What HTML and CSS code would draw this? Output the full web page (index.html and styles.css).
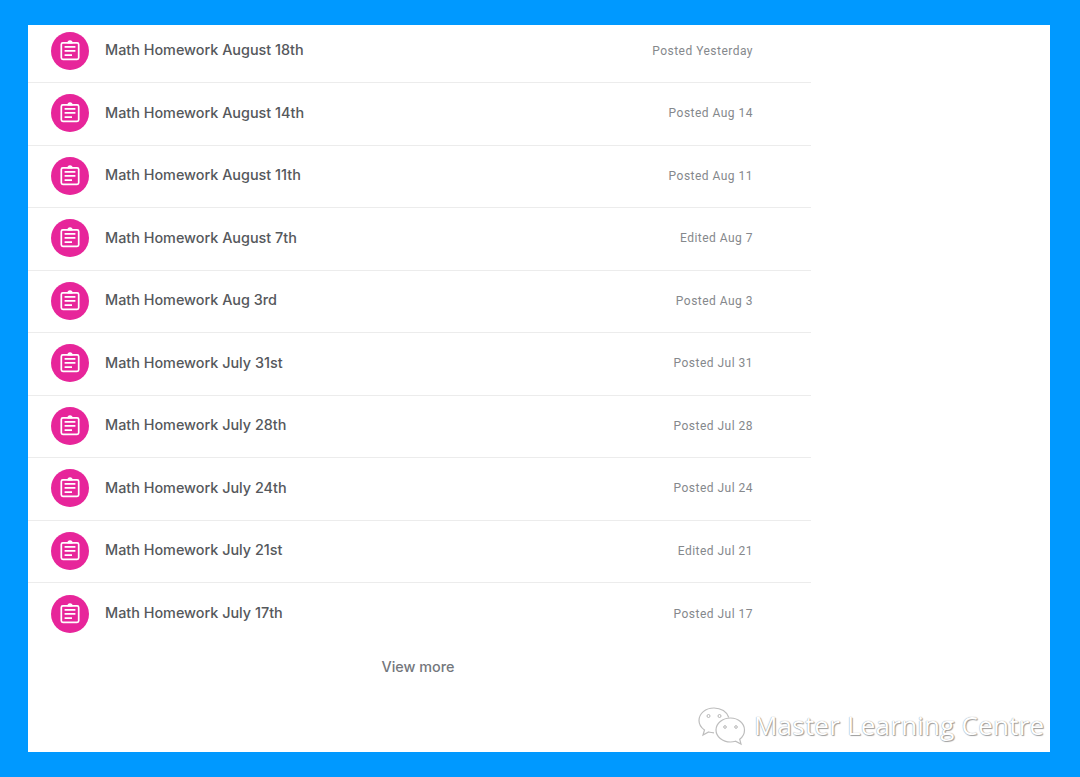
FILE: index.html
```html
<!DOCTYPE html>
<html lang="en">
<head>
<meta charset="utf-8">
<title>Classwork</title>
<link rel="stylesheet" href="styles.css">
</head>
<body>
<svg class="defs" width="0" height="0" aria-hidden="true">
  <symbol id="assign" viewBox="0 0 38 38">
    <circle cx="19" cy="19" r="19" fill="#e7259a"/>
    <rect x="10.300" y="10.800" width="17.400" height="16.600" rx="1.600" fill="none" stroke="#fff" stroke-width="1.700"/>
    <path d="M16.400 10.800a2.600 2.600 0 0 1 5.200 0v.8h-5.200z" fill="#fff"/>
    <path d="M13.600 14h10.800v1.700H13.600zM13.600 18.100h10.800v1.700H13.600zM13.600 22.200h7.400v1.700h-7.400z" fill="#fff"/>
  </symbol>
</svg>
<main class="card">
  <ul class="list">
    <li class="row"><svg class="icon"><use href="#assign"/></svg><span class="title">Math Homework August 18th</span><span class="date">Posted Yesterday</span></li>
    <li class="row"><svg class="icon"><use href="#assign"/></svg><span class="title">Math Homework August 14th</span><span class="date">Posted Aug 14</span></li>
    <li class="row"><svg class="icon"><use href="#assign"/></svg><span class="title">Math Homework August 11th</span><span class="date">Posted Aug 11</span></li>
    <li class="row"><svg class="icon"><use href="#assign"/></svg><span class="title">Math Homework August 7th</span><span class="date">Edited Aug 7</span></li>
    <li class="row"><svg class="icon"><use href="#assign"/></svg><span class="title">Math Homework Aug 3rd</span><span class="date">Posted Aug 3</span></li>
    <li class="row"><svg class="icon"><use href="#assign"/></svg><span class="title">Math Homework July 31st</span><span class="date">Posted Jul 31</span></li>
    <li class="row"><svg class="icon"><use href="#assign"/></svg><span class="title">Math Homework July 28th</span><span class="date">Posted Jul 28</span></li>
    <li class="row"><svg class="icon"><use href="#assign"/></svg><span class="title">Math Homework July 24th</span><span class="date">Posted Jul 24</span></li>
    <li class="row"><svg class="icon"><use href="#assign"/></svg><span class="title">Math Homework July 21st</span><span class="date">Edited Jul 21</span></li>
    <li class="row"><svg class="icon"><use href="#assign"/></svg><span class="title">Math Homework July 17th</span><span class="date">Posted Jul 17</span></li>
  </ul>
  <div class="more"><span>View more</span></div>
  <div class="mark">
    <svg class="mark-icon" viewBox="0 0 50 40" width="50" height="40">
      <path d="M17 2C8.500 2 2 7.500 2 14.500c0 4 2.300 7.300 5.500 9.500L6 29l5.600-3c1.800.5 3.600.8 5.400.8" fill="#fff" stroke="#bdbdbd" stroke-width="1.200"/>
      <path d="M17 2c7 0 13 3.800 14.800 9.500" fill="none" stroke="#bdbdbd" stroke-width="1.200"/>
      <path d="M33.500 12C25.500 12 19 17.300 19 24s6.500 12 14.500 12c1.800 0 3.400-.3 5-.8L44 38l-1.300-4.800c3-2.200 4.800-5.600 4.800-9.200 0-6.700-6.300-12-14-12z" fill="#fff" stroke="#bdbdbd" stroke-width="1.200"/>
      <circle cx="11.500" cy="10" r="1.500" fill="none" stroke="#b5b5b5"/>
      <circle cx="22.500" cy="10" r="1.500" fill="none" stroke="#b5b5b5"/>
      <circle cx="28" cy="21" r="1.300" fill="none" stroke="#b5b5b5"/>
      <circle cx="39" cy="21" r="1.300" fill="none" stroke="#b5b5b5"/>
    </svg>
    <span class="mark-text">Master Learning Centre</span>
  </div>
</main>
</body>
</html>
```
FILE: styles.css
```css
* { box-sizing: border-box; }
html, body { margin: 0; height: 100%; }
body {
  background: #0099ff;
  padding: 25px 30px 25px 28px;
  font-family: "Roboto", sans-serif;
  overflow: hidden;
}
.defs { position: absolute; }
.card {
  position: relative;
  background: #fff;
  height: 727px;
  overflow: hidden;
}
.list {
  list-style: none;
  margin: -4.500px 0 0;
  padding: 0;
  width: 783px;
}
.row {
  display: flex;
  align-items: center;
  height: 62.500px;
  padding: 0 58px 1px 23px;
  border-bottom: 1px solid #ececec;
}
.row:last-child { border-bottom: 0; }
.icon { width: 38px; height: 38px; flex: none; }
.title {
  margin-left: 16px;
  flex: 1;
  font-family: "Inter", sans-serif;
  font-size: 14.400px;
  line-height: 18px;
  margin-top: -1px;
  font-weight: 500;
  color: #55585c;
}
.date {
  font-size: 12px;
  letter-spacing: .48px;
  color: #85888c;
}
.more {
  width: 780px;
  margin-top: 12px;
  text-align: center;
  font-family: "Inter", sans-serif;
  font-size: 14.400px;
  font-weight: 500;
  color: #74777c;
}
.mark {
  position: absolute;
  left: 669px;
  top: 681px;
  display: flex;
  align-items: center;
  gap: 7px;
}
.mark-text {
  margin-top: -2px;
  font-family: "Open Sans", sans-serif;
  font-size: 26px;
  line-height: 40px;
  letter-spacing: .22px;
  white-space: nowrap;
  color: #fff;
  text-shadow: 0 0 1px #808080, 1px 1px 1px #a0a0a0;
}
```
